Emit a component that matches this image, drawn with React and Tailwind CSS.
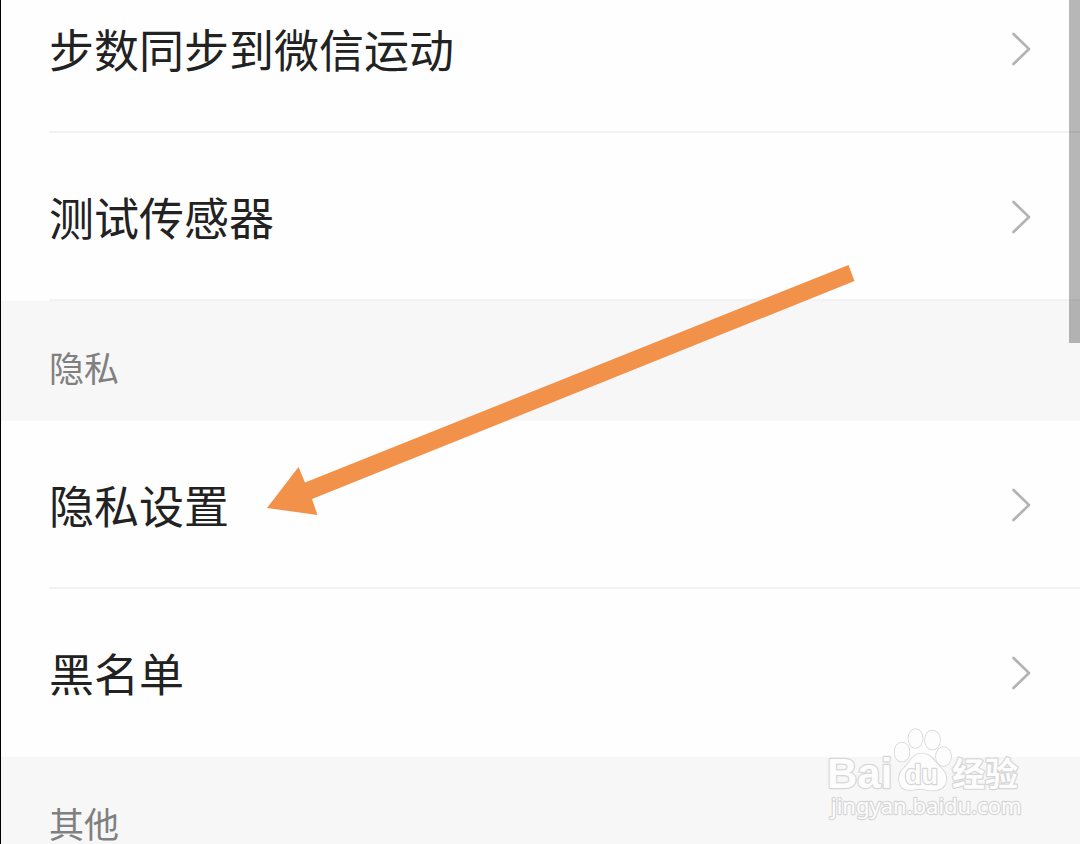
import React from "react";

const sections = [
  {
    items: ["步数同步到微信运动", "测试传感器"],
  },
  {
    title: "隐私",
    items: ["隐私设置", "黑名单"],
  },
  {
    title: "其他",
    items: [],
  },
];

function Chevron() {
  return (
    <svg
      className="h-9 w-5 shrink-0"
      viewBox="0 0 20 36"
      fill="none"
      stroke="#b3b3b3"
      strokeWidth="2.6"
      strokeLinecap="round"
      strokeLinejoin="round"
      aria-hidden="true"
    >
      <path d="M1.500 3L17 18L1.500 33" />
    </svg>
  );
}

function SettingRow({ label, divider }) {
  return (
    <a
      href="#"
      className="flex h-[168px] items-center pl-12 text-[#222222]"
    >
      <span
        className={`flex h-full flex-1 items-center justify-between border-b-2 pr-12 pt-0.5 ${
          divider ? "border-[#f2f2f2]" : "border-transparent"
        }`}
      >
        <span className="text-[45px] leading-[64px]">{label}</span>
        <Chevron />
      </span>
    </a>
  );
}

function Arrow() {
  return (
    <svg
      className="absolute left-[265px] top-[264px] h-[252px] w-[590px]"
      viewBox="266 264 590 252"
      aria-hidden="true"
    >
      <path
        d="M267 508L298.5 467L305 482.500L848.500 265L854.500 281L312 499L317.500 515Z"
        fill="#f2914a"
      />
    </svg>
  );
}

function Watermark() {
  return (
    <svg
      className="absolute left-[819px] top-[720px] h-[110px] w-[210px]"
      viewBox="820 720 210 110"
      fill="#fdfdfd"
      stroke="#d6d6d6"
      strokeWidth="2.4"
      strokeLinejoin="round"
      paintOrder="stroke"
    >
      {/* paw */}
      <g strokeWidth="1.6">
        <ellipse cx="902" cy="752" rx="7.500" ry="9.500" />
        <ellipse cx="915.500" cy="738.500" rx="7" ry="9.500" />
        <ellipse cx="932.500" cy="740" rx="7.500" ry="9.500" />
        <ellipse cx="943.500" cy="756.500" rx="7.500" ry="9.500" />
        <path d="M922 753.500C912 753.500 910 763 904 768C896 775 898 790 909 790C914 790 917 788.500 922 789C927 790 931 791 937 790C948 788 949 775 941 768C934 762 932 753.500 922 753.500Z" />
      </g>
      <text
        x="827"
        y="788"
        fontSize="42"
        fontWeight="700"
        fontFamily="'Liberation Sans', sans-serif"
      >
        Bai
      </text>
      <text
        x="905"
        y="784"
        fontSize="27"
        fontWeight="700"
        fontFamily="'Liberation Sans', sans-serif"
      >
        du
      </text>
      <text
        x="952"
        y="786"
        fontSize="33"
        fontWeight="700"
        fontFamily="'Noto Sans CJK SC', sans-serif"
      >
        经验
      </text>
      <text
        x="831"
        y="814"
        fontSize="22"
        fontFamily="'Noto Sans', sans-serif"
      >
        jingyan.baidu.com
      </text>
    </svg>
  );
}

function App() {
  return (
    <div className="relative h-screen overflow-hidden border-l border-black bg-[#fefefe] font-['Noto_Sans_CJK_SC',sans-serif]">
      {/* list is scrolled slightly, the first row is cut by the top edge */}
      <main className="-mt-[35px]">
        {sections.map((section, index) => (
          <section key={index}>
            {section.title && (
              <h2 className="flex h-[120px] items-center bg-[#f7f7f7] px-12 pt-3 text-[35px] leading-[48px] text-[#808080]">
                {section.title}
              </h2>
            )}
            {section.items.map((item, i) => (
              <SettingRow
                key={item}
                label={item}
                divider={index === 0 || i < section.items.length - 1}
              />
            ))}
          </section>
        ))}
      </main>

      {/* scrollbar thumb */}
      <div className="absolute right-0 top-0 h-[343px] w-[11px] bg-black/28" />

      <Arrow />
      <Watermark />
    </div>
  );
}

export default App;
